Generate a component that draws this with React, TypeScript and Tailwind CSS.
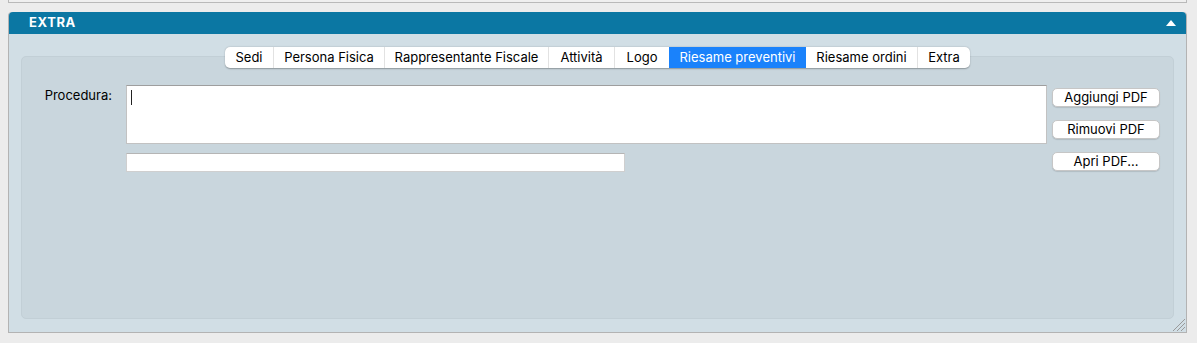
const tabs = [
  "Sedi",
  "Persona Fisica",
  "Rappresentante Fiscale",
  "Attività",
  "Logo",
  "Riesame preventivi",
  "Riesame ordini",
  "Extra",
];

const widths: Record<string, string> = {
  Sedi: "w-[48px]",
  "Persona Fisica": "w-[111px]",
  "Rappresentante Fiscale": "w-[164px]",
  Attività: "w-[66px]",
  Logo: "w-[55px]",
  "Riesame preventivi": "w-[137px]",
  "Riesame ordini": "w-[111px]",
  Extra: "w-[53px]",
};

function PdfButton({ label }: { label: string }) {
  return (
    <button className="h-[19px] w-[108px] rounded-[5px] border border-[#c6c6c6] bg-white text-[13px] leading-[17px] text-black shadow-[0_1px_1px_rgba(0,0,0,0.12)]">
      {label}
    </button>
  );
}

export default function App() {
  const active = "Riesame preventivi";

  return (
    <div
      className="h-[343px] w-full overflow-hidden bg-[#ececec] text-black"
      style={{ fontFamily: "Inter, 'Liberation Sans', sans-serif" }}
    >
      {/* bottom of the previous panel */}
      <div className="ml-[8px] mr-[10px] h-[3px] border-x border-b border-[#b9b9b9] bg-[#efefef]" />

      <div className="ml-[8px] mr-[10px] mt-[9px] rounded-t-[4px] border-x border-b border-[#b3b3b3] bg-[#d1dee5]">
        {/* header */}
        <div className="flex h-[22px] items-center justify-between rounded-t-[4px] bg-[#0b77a3] pl-[20px] pr-[10px]">
          <span className="text-[13px] font-bold tracking-[0.6px] text-white">EXTRA</span>
          <svg width="10" height="6" viewBox="0 0 10 6">
            <polygon points="5,0 10,6 0,6" fill="#ffffff" />
          </svg>
        </div>

        <div className="relative px-[12px] pb-[13px] pt-[13px]">
          {/* tabs */}
          <div className="relative z-10 flex justify-center">
            <div className="flex h-[21px] overflow-hidden rounded-[5px] bg-white shadow-[0_0.5px_1.5px_rgba(0,0,0,0.3)]">
              {tabs.map((t, i) => (
                <div
                  key={t}
                  className={
                    t === active
                      ? `${widths[t]} flex items-center justify-center bg-[#1a82fb] text-[13px] text-white`
                      : `${widths[t]} flex items-center justify-center text-[13px] text-black ${
                          i > 0 && tabs[i - 1] !== active ? "border-l border-[#e2e2e2]" : ""
                        }`
                  }
                >
                  {t}
                </div>
              ))}
            </div>
          </div>

          {/* inner panel */}
          <div className="-mt-[12px] h-[263px] rounded-[5px] border border-[#c2cfd6] bg-[#c9d6dd] pt-[28px]">
            <div className="flex">
              <div className="w-[90px] pt-[1px] text-right text-[13px]">Procedura:</div>
              <div className="ml-[14px] w-[921px]">
                <div className="relative h-[59px] border border-[#c2c2c2] border-t-[#9e9e9e] bg-white">
                  <div className="absolute left-[4px] top-[4px] h-[15px] w-px bg-[#222]" />
                </div>
                <div className="mt-[9px] h-[19px] w-[499px] border border-[#cfcfcf] border-t-[#b5b5b5] bg-white" />
              </div>
              <div className="ml-[5px] flex flex-col gap-[13px] pt-[3px]">
                <PdfButton label="Aggiungi PDF" />
                <PdfButton label="Rimuovi PDF" />
                <PdfButton label="Apri PDF..." />
              </div>
            </div>
          </div>

          {/* resize grip */}
          <svg className="absolute bottom-[1px] right-[1px]" width="13" height="13" viewBox="0 0 13 13">
            <line x1="13" y1="1" x2="1" y2="13" stroke="#9a9a9a" strokeWidth="1" />
            <line x1="13" y1="5" x2="5" y2="13" stroke="#9a9a9a" strokeWidth="1" />
            <line x1="13" y1="9" x2="9" y2="13" stroke="#9a9a9a" strokeWidth="1" />
          </svg>
        </div>
      </div>
    </div>
  );
}
